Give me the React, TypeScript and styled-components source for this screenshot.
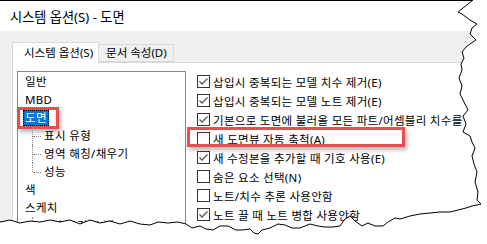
import styled, {createGlobalStyle} from "styled-components";

const GlobalStyle = createGlobalStyle`
  html, body {
    margin: 0;
    padding: 0;
    background: #ffffff;
  }

  body {
    font-family: "Noto Sans", "Noto Sans CJK KR", sans-serif;
    color: #000;
  }
`;

const Frame = styled.div`
  position: relative;
  width: 487px;
  height: 244px;
  overflow: hidden;
  background: #fff;
`;

const Dialog = styled.div`
  width: 487px;
  height: 244px;
  display: flex;
  flex-direction: column;
  border-top: 1px solid #000;
  box-sizing: border-box;
`;

const TitleBar = styled.div`
  height: 30px;
  flex-shrink: 0;
  display: flex;
  align-items: center;
  padding-left: 10px;
  font-size: 13.2px;
  background: #fff;
`;

const Body = styled.div`
  flex: 1;
  background: #f0f0f0;
  padding-top: 11px;
  display: flex;
  flex-direction: column;
`;

const TabStrip = styled.div`
  display: flex;
  align-items: flex-end;
  margin-left: 12px;
  height: 20px;
  position: relative;
  z-index: 1;
`;

const Tab = styled.div<{ active?: boolean }>`
  height: ${p => p.active ? 21 : 18}px;
  box-sizing: border-box;
  padding: 0 ${p => p.active ? 5 : 6}px 0 ${p => p.active ? 11 : 7}px;
  border: 1px solid #d9d9d9;
  border-bottom: ${p => p.active ? "none" : "1px solid #d9d9d9"};
  border-left: ${p => p.active ? "1px solid #d9d9d9" : "none"};
  background: ${p => p.active ? "#fff" : "#f0f0f0"};
  font-size: 11.5px;
  line-height: ${p => p.active ? 19 : 16}px;
  margin-bottom: ${p => p.active ? -1 : 0}px;
`;

const TabPage = styled.div`
  flex: 1;
  margin-left: 12px;
  background: #fff;
  border: 1px solid #d9d9d9;
  padding: 8px 0 0 4px;
  display: flex;
  align-items: flex-start;
`;

const Tree = styled.div`
  width: 169px;
  height: 200px;
  box-sizing: border-box;
  border: 1px solid #828790;
  padding-top: 1px;
  flex-shrink: 0;
`;

const TreeRow = styled.div<{ indent?: number }>`
  position: relative;
  height: 18px;
  line-height: 18px;
  font-size: 11.5px;
  letter-spacing: 0.35px;
  padding-left: ${p => p.indent ? 24 : 5}px;
`;

const TreeLabel = styled.span<{ selected?: boolean }>`
  display: inline-block;
  padding: 0 2px;
  line-height: 16px;
  color: ${p => p.selected ? "#fff" : "#000"};
  background: ${p => p.selected ? "#0078d7" : "transparent"};
  outline: ${p => p.selected ? "1px dotted #000" : "none"};
  outline-offset: -1px;
`;

const Connector = styled.span<{ last?: boolean }>`
  position: absolute;
  left: 14px;
  top: 0;
  width: 8px;
  height: ${p => p.last ? 9 : 18}px;
  border-left: 1px dotted #8a8a8a;

  &::after {
    content: "";
    position: absolute;
    left: 0;
    top: 9px;
    width: 8px;
    border-top: 1px dotted #8a8a8a;
  }
`;

const Highlight = styled.span<{ top: number; left: number; width: number; height: number }>`
  position: absolute;
  top: ${p => p.top}px;
  left: ${p => p.left}px;
  width: ${p => p.width}px;
  height: ${p => p.height}px;
  box-sizing: border-box;
  border: 3px solid #ef4b4f;
  box-shadow: 2px 3px 4px rgba(0, 0, 0, 0.28);
  pointer-events: none;
`;

const Options = styled.div`
  display: flex;
  flex-direction: column;
  margin-left: 11px;
  margin-top: 1px;
`;

const OptionRow = styled.div`
  position: relative;
  display: flex;
  align-items: center;
  height: 19px;
  font-size: 11.5px;
  letter-spacing: 0.3px;
  white-space: nowrap;
`;

const Box = styled.span`
  width: 13px;
  height: 13px;
  box-sizing: border-box;
  border: 1px solid #333;
  background: #fff;
  margin-right: 3px;
  flex-shrink: 0;
  display: flex;
`;

const TornEdge = styled.svg`
  position: absolute;
  left: 0;
  top: 0;
`;

const edge: [number, number][] = [
    [473, 0], [468, 4], [458, 12], [462, 14], [470, 20], [477, 24], [472, 28], [470, 34], [476, 40],
    [470, 44], [466, 47], [462, 52], [464, 58], [461, 64], [462, 70], [459, 78], [462, 86], [460, 94],
    [463, 100], [468, 110], [463, 116], [466, 124], [463, 132], [470, 136], [472, 142], [475, 148],
    [472, 156], [474, 164], [477, 172], [475, 182], [478, 192], [477, 200], [481, 204], [472, 206],
    [466, 208], [458, 210], [450, 212], [440, 212], [430, 213], [420, 214], [410, 216], [400, 219],
    [395, 218], [388, 222], [383, 226], [375, 226], [368, 223], [362, 226], [355, 221], [350, 216],
    [345, 219], [340, 226], [333, 227], [325, 227], [318, 226], [310, 224], [300, 228], [292, 228],
    [285, 225], [278, 224], [270, 228], [262, 230], [258, 234], [254, 233], [250, 229], [242, 230],
    [236, 230], [228, 226], [220, 226], [213, 230], [206, 229], [200, 226], [192, 228], [186, 224],
    [178, 222], [168, 223], [158, 222], [150, 225], [140, 224], [130, 221], [120, 224], [110, 221],
    [100, 223], [90, 220], [80, 224], [70, 220], [60, 222], [50, 220], [40, 222], [30, 221], [20, 223],
    [10, 220], [0, 222],
];

const Check = ({checked}: { checked: boolean }) =>
    <Box>
        {checked && <svg width="11" height="11" viewBox="0 0 11 11">
            <polyline points="1.5,5.5 4,8 9.5,2.5" fill="none" stroke="#555" strokeWidth="1.3"/>
        </svg>}
    </Box>;

const options = [
    {label: "삽입시 중복되는 모델 치수 제거(E)", checked: true},
    {label: "삽입시 중복되는 모델 노트 제거(E)", checked: true},
    {label: "기본으로 도면에 불러올 모든 파트/어셈블리 치수를", checked: true},
    {label: "새 도면뷰 자동 축척(A)", checked: false, marked: true},
    {label: "새 수정본을 추가할 때 기호 사용(E)", checked: true},
    {label: "숨은 요소 선택(N)", checked: false},
    {label: "노트/치수 추론 사용안함", checked: false},
    {label: "노트 끌 때 노트 병합 사용안함", checked: true},
];

const App = () => {
    const line = edge.map(([x, y]) => `${x},${y}`).join(" ");
    return <Frame>
        <GlobalStyle/>
        <Dialog>
            <TitleBar>시스템 옵션(S) - 도면</TitleBar>
            <Body>
                <TabStrip>
                    <Tab active>시스템 옵션(S)</Tab>
                    <Tab>문서 속성(D)</Tab>
                </TabStrip>
                <TabPage>
                    <Tree>
                        <TreeRow><TreeLabel>일반</TreeLabel></TreeRow>
                        <TreeRow><TreeLabel>MBD</TreeLabel></TreeRow>
                        <TreeRow>
                            <TreeLabel selected>도면</TreeLabel>
                            <Highlight top={-2} left={-1} width={42} height={22}/>
                        </TreeRow>
                        <TreeRow indent={1}><Connector/><TreeLabel>표시 유형</TreeLabel></TreeRow>
                        <TreeRow indent={1}><Connector/><TreeLabel>영역 해칭/채우기</TreeLabel></TreeRow>
                        <TreeRow indent={1}><Connector last/><TreeLabel>성능</TreeLabel></TreeRow>
                        <TreeRow><TreeLabel>색</TreeLabel></TreeRow>
                        <TreeRow><TreeLabel>스케치</TreeLabel></TreeRow>
                        <TreeRow indent={1}><Connector/><TreeLabel>구속조건/스냅</TreeLabel></TreeRow>
                    </Tree>
                    <Options>
                        {options.map(o =>
                            <OptionRow key={o.label}>
                                <Check checked={o.checked}/>
                                {o.label}
                                {o.marked && <Highlight top={-2} left={-10} width={218} height={20}/>}
                            </OptionRow>
                        )}
                    </Options>
                </TabPage>
            </Body>
        </Dialog>
        <TornEdge width="487" height="244" viewBox="0 0 487 244">
            <polygon points={`${line} 0,244 487,244 487,0`} fill="#fff"/>
            <polyline points={line} fill="none" stroke="#000" strokeWidth="1"/>
        </TornEdge>
    </Frame>
};

export default App;
